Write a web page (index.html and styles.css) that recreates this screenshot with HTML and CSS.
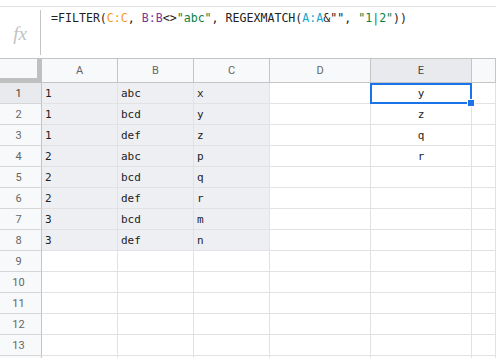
FILE: index.html
```html
<!DOCTYPE html>
<html>
<head>
  <title>Sheet</title>
  <link rel="stylesheet" href="styles.css">
</head>
<body>
  <div class="formula-bar">
    <div class="fx">fx</div>
    <div class="formula">=FILTER(<span class="r-orange">C:C</span>, <span class="r-purple">B:B</span>&lt;&gt;<span class="str">"abc"</span>, REGEXMATCH(<span class="r-blue">A:A</span>&amp;"", <span class="str">"1|2"</span>))</div>
  </div>

  <div class="sheet">
    <div class="corner"></div>
    <div class="col-head">A</div>
    <div class="col-head">B</div>
    <div class="col-head">C</div>
    <div class="col-head">D</div>
    <div class="col-head on">E</div>
    <div class="col-head"></div>

    <div class="row-head on">1</div>
    <div class="cell src">1</div><div class="cell src">abc</div><div class="cell src">x</div>
    <div class="cell"></div><div class="cell mid active">y</div><div class="cell"></div>

    <div class="row-head">2</div>
    <div class="cell src">1</div><div class="cell src">bcd</div><div class="cell src">y</div>
    <div class="cell"></div><div class="cell mid">z</div><div class="cell"></div>

    <div class="row-head">3</div>
    <div class="cell src">1</div><div class="cell src">def</div><div class="cell src">z</div>
    <div class="cell"></div><div class="cell mid">q</div><div class="cell"></div>

    <div class="row-head">4</div>
    <div class="cell src">2</div><div class="cell src">abc</div><div class="cell src">p</div>
    <div class="cell"></div><div class="cell mid">r</div><div class="cell"></div>

    <div class="row-head">5</div>
    <div class="cell src">2</div><div class="cell src">bcd</div><div class="cell src">q</div>
    <div class="cell"></div><div class="cell"></div><div class="cell"></div>

    <div class="row-head">6</div>
    <div class="cell src">2</div><div class="cell src">def</div><div class="cell src">r</div>
    <div class="cell"></div><div class="cell"></div><div class="cell"></div>

    <div class="row-head">7</div>
    <div class="cell src">3</div><div class="cell src">bcd</div><div class="cell src">m</div>
    <div class="cell"></div><div class="cell"></div><div class="cell"></div>

    <div class="row-head">8</div>
    <div class="cell src">3</div><div class="cell src">def</div><div class="cell src">n</div>
    <div class="cell"></div><div class="cell"></div><div class="cell"></div>

    <div class="row-head">9</div>
    <div class="cell"></div><div class="cell"></div><div class="cell"></div>
    <div class="cell"></div><div class="cell"></div><div class="cell"></div>

    <div class="row-head">10</div>
    <div class="cell"></div><div class="cell"></div><div class="cell"></div>
    <div class="cell"></div><div class="cell"></div><div class="cell"></div>

    <div class="row-head">11</div>
    <div class="cell"></div><div class="cell"></div><div class="cell"></div>
    <div class="cell"></div><div class="cell"></div><div class="cell"></div>

    <div class="row-head">12</div>
    <div class="cell"></div><div class="cell"></div><div class="cell"></div>
    <div class="cell"></div><div class="cell"></div><div class="cell"></div>

    <div class="row-head">13</div>
    <div class="cell"></div><div class="cell"></div><div class="cell"></div>
    <div class="cell"></div><div class="cell"></div><div class="cell"></div>

    <div class="row-head"></div>
    <div class="cell"></div><div class="cell"></div><div class="cell"></div>
    <div class="cell"></div><div class="cell"></div><div class="cell"></div>
  </div>
</body>
</html>
```

FILE: styles.css
```css
html, body {
  margin: 0;
  height: 100%;
  overflow: hidden;
  background: #fff;
}

.formula-bar {
  display: flex;
  margin-top: 6px;
  height: 53px;
  box-sizing: border-box;
  border-top: 1px solid #e0e0e0;
  border-bottom: 1px solid #c4c4c4;
}
.fx {
  width: 41px;
  margin: 3px 0 3px;
  border-right: 1px solid #c4c4c4;
  display: flex;
  align-items: center;
  justify-content: center;
  padding-top: 3px;
  box-sizing: border-box;
  font-family: "Liberation Serif", serif;
  font-style: italic;
  font-size: 19px;
  color: #c2c2c2;
}
.formula {
  margin-left: 10px;
  padding-top: 3px;
  font-family: "DejaVu Sans Mono", monospace;
  font-size: 11.6px;
  line-height: 16px;
  color: #222;
  white-space: pre;
}
.r-orange { color: #f7981d; }
.r-purple { color: #7e3794; }
.r-blue { color: #11a9cc; }
.str { color: #0b8043; }

.sheet {
  display: grid;
  grid-template-columns: 42px 76px 76px 76px 101px 101px 1fr;
  grid-template-rows: 24px;
  grid-auto-rows: 21px;
}
.sheet > div {
  box-sizing: border-box;
}

.corner {
  background: #f8f9fa;
  border-right: 5px solid #c0c0c0;
  border-bottom: 5px solid #c0c0c0;
}
.col-head {
  background: #f8f9fa;
  border-right: 1px solid #c4c4c4;
  border-bottom: 1px solid #c4c4c4;
  text-align: center;
  font-family: Roboto, sans-serif;
  font-size: 11px;
  line-height: 23px;
  color: #666;
}
.col-head.on {
  background: #e8eaed;
  color: #444;
}
.row-head {
  background: #f8f9fa;
  border-right: 1px solid #c4c4c4;
  border-bottom: 1px solid #d6d6d6;
  padding: 1px 4px 0 0;
  text-align: center;
  font-family: Roboto, sans-serif;
  font-size: 11px;
  line-height: 19px;
  color: #666;
}
.row-head.on {
  background: #e8eaed;
  color: #444;
}

.cell {
  border-right: 1px solid #e2e2e3;
  border-bottom: 1px solid #e2e2e3;
  padding: 1px 0 0 3px;
  font-family: "DejaVu Sans Mono", monospace;
  font-size: 11px;
  line-height: 19px;
  color: #222;
}
.cell.src {
  background: #eeeff2;
}
.cell.mid {
  text-align: center;
  padding-left: 0;
}
.cell.active {
  position: relative;
}
.cell.active::before {
  content: "";
  position: absolute;
  left: -1px;
  top: 0;
  width: 102px;
  height: 21px;
  box-sizing: border-box;
  border: 2px solid #1a73e8;
}
.cell.active::after {
  content: "";
  position: absolute;
  left: 96px;
  top: 16px;
  width: 6px;
  height: 6px;
  background: #1a73e8;
  border: 1px solid #fff;
}
```
